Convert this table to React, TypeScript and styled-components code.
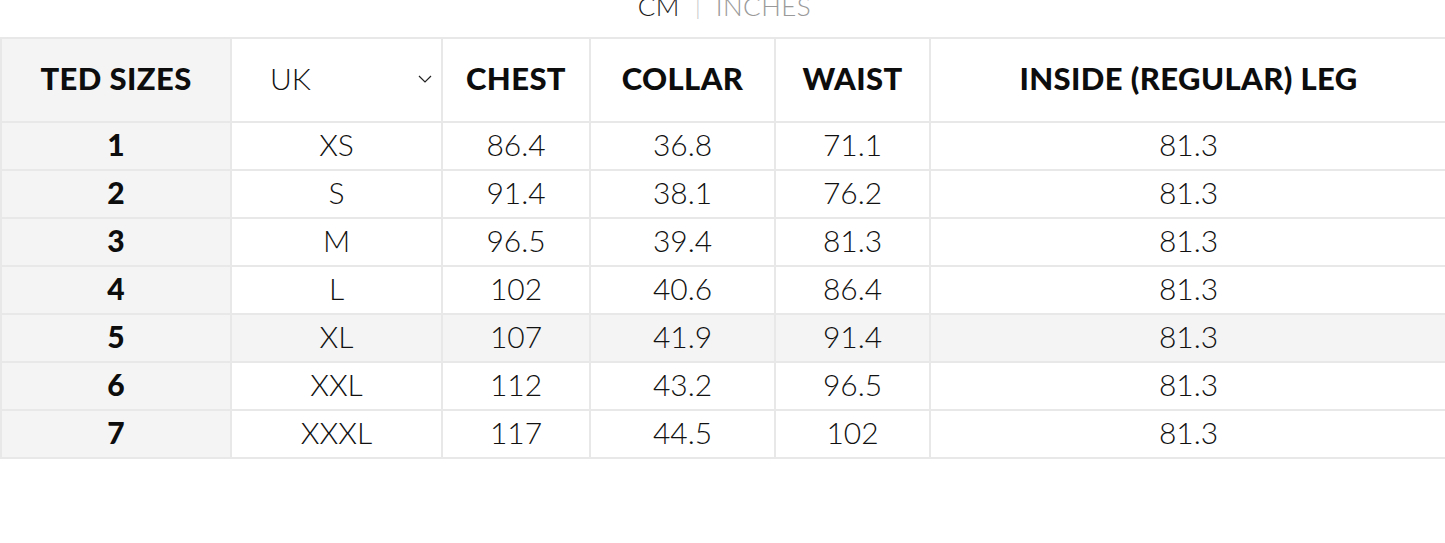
import styled, { createGlobalStyle } from "styled-components";

const rows = [
  { ted: "1", uk: "XS", chest: "86.4", collar: "36.8", waist: "71.1", leg: "81.3" },
  { ted: "2", uk: "S", chest: "91.4", collar: "38.1", waist: "76.2", leg: "81.3" },
  { ted: "3", uk: "M", chest: "96.5", collar: "39.4", waist: "81.3", leg: "81.3" },
  { ted: "4", uk: "L", chest: "102", collar: "40.6", waist: "86.4", leg: "81.3" },
  { ted: "5", uk: "XL", chest: "107", collar: "41.9", waist: "91.4", leg: "81.3", hover: true },
  { ted: "6", uk: "XXL", chest: "112", collar: "43.2", waist: "96.5", leg: "81.3" },
  { ted: "7", uk: "XXXL", chest: "117", collar: "44.5", waist: "102", leg: "81.3" },
];

const colWidths = [230, 211, 148, 185, 155, 517];

export default function App() {
  return (
    <>
      <GlobalStyle />
      <Page>
        <UnitToggle>
          <Unit $active>CM</Unit>
          <Pipe>|</Pipe>
          <Unit>INCHES</Unit>
        </UnitToggle>

        <Table>
          <colgroup>
            {colWidths.map((w, i) => (
              <col key={i} style={{ width: w }} />
            ))}
          </colgroup>
          <thead>
            <tr>
              <HeadCell $shaded>TED SIZES</HeadCell>
              <SelectCell>
                <SelectBox>
                  <span>UK</span>
                  <svg width="14" height="8" viewBox="0 0 14 8">
                    <polyline points="1,1 7,7 13,1" fill="none" stroke="#222" strokeWidth="1.2" />
                  </svg>
                </SelectBox>
              </SelectCell>
              <HeadCell>CHEST</HeadCell>
              <HeadCell>COLLAR</HeadCell>
              <HeadCell>WAIST</HeadCell>
              <HeadCell>INSIDE (REGULAR) LEG</HeadCell>
            </tr>
          </thead>
          <tbody>
            {rows.map((r) => (
              <Row key={r.ted} $hover={r.hover}>
                <SizeCell>{r.ted}</SizeCell>
                <Cell>{r.uk}</Cell>
                <Cell>{r.chest}</Cell>
                <Cell>{r.collar}</Cell>
                <Cell>{r.waist}</Cell>
                <Cell>{r.leg}</Cell>
              </Row>
            ))}
          </tbody>
        </Table>
      </Page>
    </>
  );
}

const GlobalStyle = createGlobalStyle`
  html, body {
    margin: 0;
    padding: 0;
    overflow: hidden;
    background: #ffffff;
  }
  body {
    font-family: Lato, "Liberation Sans", sans-serif;
    color: #111;
  }
`;

const Page = styled.div`
  width: 1445px;
  height: 543px;
  overflow: hidden;
  display: flex;
  flex-direction: column;
`;

const UnitToggle = styled.div`
  display: flex;
  justify-content: center;
  align-items: center;
  gap: 15px;
  height: 26px;
  margin-top: -7px;
  margin-bottom: 18px;
  padding-left: 4px;
  font-size: 26px;
  line-height: 26px;
  font-weight: 300;
`;

const Unit = styled.span<{ $active?: boolean }>`
  color: ${(p) => (p.$active ? "#1a1a1a" : "#9a9a9a")};
  letter-spacing: 0.5px;
`;

const Pipe = styled.span`
  color: #c8c8c8;
  font-size: 24px;
`;

const Table = styled.table`
  width: 1446px;
  table-layout: fixed;
  border-collapse: separate;
  border-spacing: 0;
  border-top: 2px solid #e8e8e8;
  border-left: 2px solid #e8e8e8;
  flex-shrink: 0;

  th,
  td {
    border-right: 2px solid #e8e8e8;
    border-bottom: 2px solid #e8e8e8;
    padding: 0;
    text-align: center;
    vertical-align: middle;
  }
`;

const HeadCell = styled.th<{ $shaded?: boolean }>`
  && {
    padding-bottom: 5px;
  }
  height: 77px;
  font-size: 31px;
  font-weight: 900;
  letter-spacing: 0.4px;
  color: #0d0d0d;
  background: ${(p) => (p.$shaded ? "#f4f4f4" : "#ffffff")};
  white-space: nowrap;
`;

const SelectCell = styled.th`
  && {
    padding-bottom: 5px;
  }
  height: 77px;
  background: #ffffff;
`;

const SelectBox = styled.div`
  display: flex;
  align-items: center;
  justify-content: space-between;
  padding: 0 9px 0 38px;
  font-size: 30px;
  font-weight: 300;
  color: #111;

  svg {
    margin-top: 2px;
  }
`;

const Row = styled.tr<{ $hover?: boolean }>`
  td {
    background: ${(p) => (p.$hover ? "#f4f4f4" : "#ffffff")};
  }
`;

const Cell = styled.td`
  && {
    padding-bottom: 3px;
  }
  height: 43px;
  font-size: 30px;
  font-weight: 300;
  line-height: 43px;
  color: #111;
`;

const SizeCell = styled(Cell)`
  && {
    background: #f4f4f4;
  }
  font-weight: 900;
  color: #0d0d0d;
`;
